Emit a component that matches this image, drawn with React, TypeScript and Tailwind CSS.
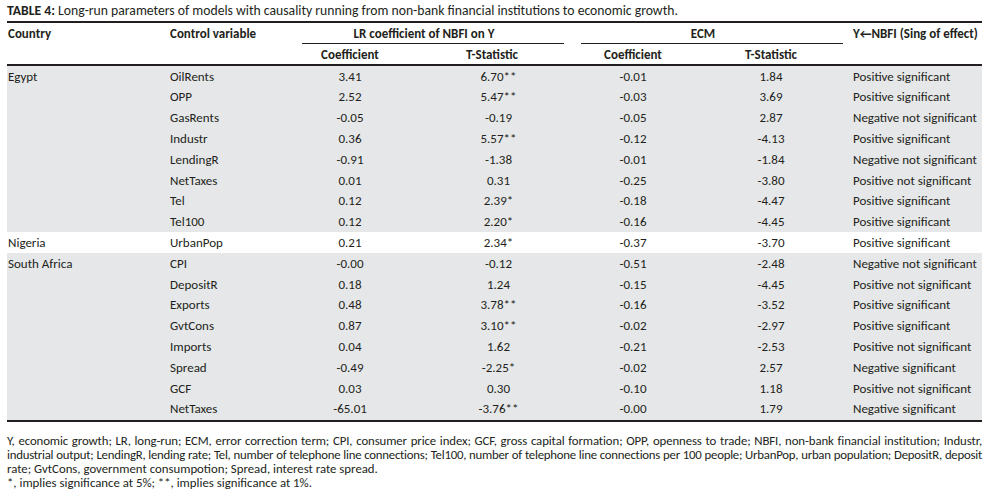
import React from "react";

type Row = [string, string, string, string, string, string, string];

const rows: Row[] = [
  ["Egypt", "OilRents", "3.41", "6.70**", "-0.01", "1.84", "Positive significant"],
  ["", "OPP", "2.52", "5.47**", "-0.03", "3.69", "Positive significant"],
  ["", "GasRents", "-0.05", "-0.19", "-0.05", "2.87", "Negative not significant"],
  ["", "Industr", "0.36", "5.57**", "-0.12", "-4.13", "Positive significant"],
  ["", "LendingR", "-0.91", "-1.38", "-0.01", "-1.84", "Negative not significant"],
  ["", "NetTaxes", "0.01", "0.31", "-0.25", "-3.80", "Positive not significant"],
  ["", "Tel", "0.12", "2.39*", "-0.18", "-4.47", "Positive significant"],
  ["", "Tel100", "0.12", "2.20*", "-0.16", "-4.45", "Positive significant"],
  ["Nigeria", "UrbanPop", "0.21", "2.34*", "-0.37", "-3.70", "Positive significant"],
  ["South Africa", "CPI", "-0.00", "-0.12", "-0.51", "-2.48", "Negative not significant"],
  ["", "DepositR", "0.18", "1.24", "-0.15", "-4.45", "Positive not significant"],
  ["", "Exports", "0.48", "3.78**", "-0.16", "-3.52", "Positive significant"],
  ["", "GvtCons", "0.87", "3.10**", "-0.02", "-2.97", "Positive significant"],
  ["", "Imports", "0.04", "1.62", "-0.21", "-2.53", "Positive not significant"],
  ["", "Spread", "-0.49", "-2.25*", "-0.02", "2.57", "Negative significant"],
  ["", "GCF", "0.03", "0.30", "-0.10", "1.18", "Positive not significant"],
  ["", "NetTaxes", "-65.01", "-3.76**", "-0.00", "1.79", "Negative significant"],
];

const cols = "grid grid-cols-[163px_120px_120px_164px_118px_158px_132px]";

export default function App() {
  return (
    <div
      className="w-[995px] h-[492px] bg-white text-[#231f20] overflow-hidden"
      style={{ fontFamily: "Carlito, Calibri, Lato, 'Open Sans', sans-serif" }}
    >
      <div className="ml-[7px] w-[975px]">
        <div className="pt-[3px] h-[21px] text-[13.7px] leading-[16px] whitespace-nowrap">
          <span className="font-bold">TABLE 4:</span> Long-run parameters of models with causality running from non-bank financial institutions to economic growth.
        </div>
        <div className="border-t-2 border-[#231f20]" />
        <div className={`${cols} text-[13px] font-bold`}>
          <div className="row-span-2 pl-[1px] pt-[3px] leading-[16px]">Country</div>
          <div className="row-span-2 pt-[3px] leading-[16px]">Control variable</div>
          <div className="col-span-2 flex flex-col">
            <div className="h-[20px] pt-[3px] text-center pr-[16px] leading-[16px]">LR coefficient of NBFI on Y</div>
            <div className="ml-[12px] mr-[10px] border-t border-[#231f20]" />
          </div>
          <div className="col-span-2 flex flex-col">
            <div className="h-[20px] pt-[3px] text-center pr-[18px] leading-[16px]">ECM</div>
            <div className="ml-[7px] mr-[7px] border-t border-[#231f20]" />
          </div>
          <div className="row-span-2 pl-[3px] pt-[3px] leading-[16px] whitespace-nowrap">Y←NBFI (Sing of effect)</div>
          <div className="h-[20px] pt-[3px] text-center leading-[16px]">Coefficient</div>
          <div className="h-[20px] pt-[3px] text-center leading-[16px]">T-Statistic</div>
          <div className="h-[20px] pt-[3px] text-center leading-[16px]">Coefficient</div>
          <div className="h-[20px] pt-[3px] text-center leading-[16px]">T-Statistic</div>
        </div>
        <div className="border-t-2 border-[#231f20]" />
        <div className="text-[13px]">
          {rows.map((r, i) => (
            <div
              key={i}
              className={`${cols} h-[20.8px] items-center ${r[0] === "Nigeria" ? "bg-white" : "bg-[#e6e7e8]"}`}
            >
              <div className="pl-[1px]">{r[0]}</div>
              <div>{r[1]}</div>
              <div className="text-center">{r[2]}</div>
              <div className="text-center pl-[13px]">{r[3]}</div>
              <div className="text-center">{r[4]}</div>
              <div className="text-center">{r[5]}</div>
              <div className="pl-[3px] whitespace-nowrap">{r[6]}</div>
            </div>
          ))}
        </div>
        <div className="border-t-2 border-[#231f20]" />
        <div className="mt-[12px] text-[12.8px] leading-[14.3px]">
          <p className="whitespace-nowrap text-justify [text-align-last:justify] tracking-[-0.1px]">
            Y, economic growth; LR, long-run; ECM, error correction term; CPI, consumer price index; GCF, gross capital formation; OPP, openness to trade; NBFI, non-bank financial institution; Industr,
          </p>
          <p className="whitespace-nowrap text-justify [text-align-last:justify] tracking-[-0.24px]">
            industrial output; LendingR, lending rate; Tel, number of telephone line connections; Tel100, number of telephone line connections per 100 people; UrbanPop, urban population; DepositR, deposit
          </p>
          <p className="whitespace-nowrap">
            rate; GvtCons, government consumpotion; Spread, interest rate spread.
          </p>
          <p>*, implies significance at 5%; **, implies significance at 1%.</p>
        </div>
      </div>
    </div>
  );
}
